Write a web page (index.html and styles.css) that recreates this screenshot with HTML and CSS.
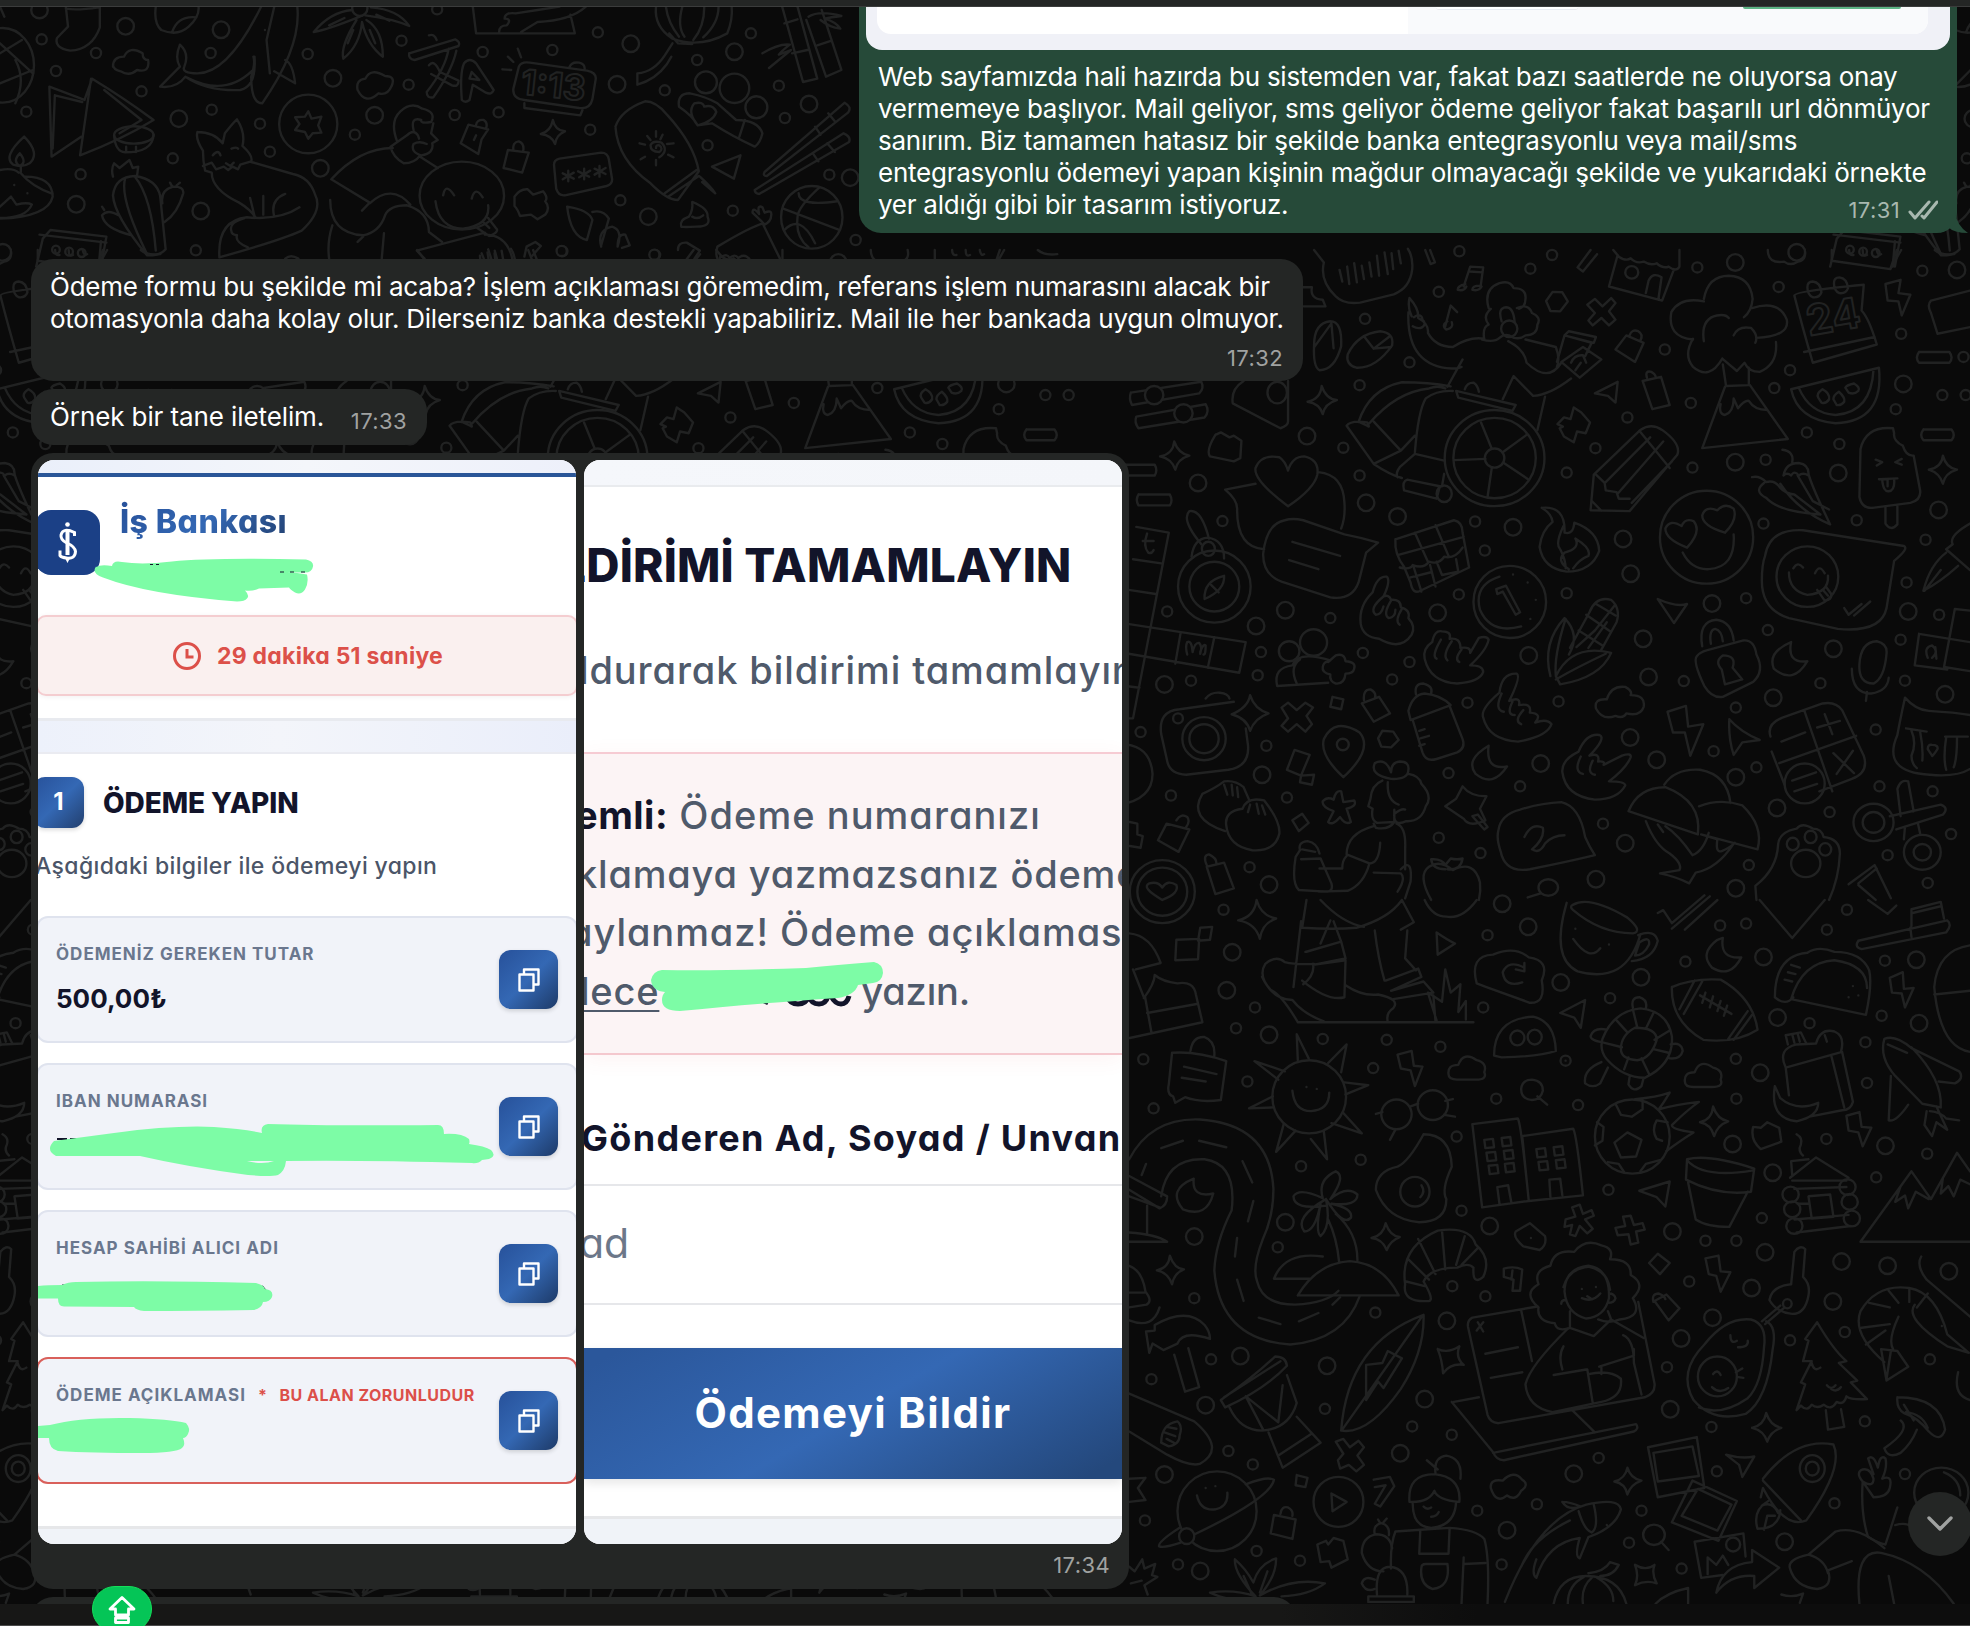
FILE: index.html
```html
<!DOCTYPE html>
<html lang="tr">
<head>
    <meta charset="UTF-8">
    <meta name="viewport" content="width=device-width, initial-scale=1.0">
    <title>Sohbet</title>
    <link rel="stylesheet" href="styles.css">
</head>
<body>
    <div class="chat">
        <!-- Duvar kağıdı -->
        <svg class="wallpaper" width="1970" height="1626" viewBox="0 0 1970 1626" aria-hidden="true">
            <defs>
                <path id="dots-a" d="M626 3h0M797 12h0M757 45h0M1065 42h0M588 101h0M452 166h0M534 271h0M442 326h0M1005 240h0M1215 89h0M1236 290h0M1441 202h0M1480 50h0M1207 333h0M1053 369h0M1431 384h0M1267 440h0M1327 468h0M1191 506h0M1056 525h0M936 404h0M877 478h0M824 537h0M412 477h0M442 544h0M189 654h0M655 655h0M673 725h0M625 831h0M824 828h0M388 888h0M87 872h0M260 970h0M448 972h0M534 994h0M254 1026h0M131 1039h0M502 1036h0M641 1092h0M809 1089h0M270 1196h0M38 1163h0M94 1316h0M308 1321h0M606 1262h0M738 1294h0M1187 660h0M1359 652h0M1486 699h0M1451 802h0M1155 840h0M1195 917h0M1440 940h0M1511 880h0M1448 1039h0M1292 1045h0M1040 1040h0M1136 1104h0M1095 1209h0M1174 1248h0M1394 1157h0M1401 1294h0M1499 1306h0M1309 1356h0M1533 1409h0M1416 1460h0M1160 1484h0M1490 1527h0M891 1384h0M665 1455h0M588 1418h0M239 1489h0M1556 258h0M1560 350h0M1517 350h0"/>
                <path id="rings-a" d="M1135 30h0M1544 48h0M1445 323h0M345 449h0M144 562h0M454 610h0M512 643h0M725 669h0M928 697h0M942 781h0M1135 512h0M1325 538h0M1510 627h0M1092 853h0M965 938h0M975 1030h0M754 978h0M586 875h0M305 869h0M251 907h0M82 1048h0M1205 1080h0M1316 962h0M1454 872h0M1522 1072h0M941 1176h0M990 1230h0M776 1239h0M262 1266h0M275 1531h0M932 1431h0M878 1518h0M1136 1272h0M1212 1346h0M1136 1540h0"/>
                <path id="dots-b" d="M191 21h0M678 76h0M249 232h0M214 277h0M374 300h0M492 302h0M591 317h0M43 344h0M467 363h0M235 392h0M62 450h0M670 232h0M822 347h0M845 443h0M694 429h0M621 511h0M444 561h0M334 575h0M630 671h0M901 626h0M291 750h0M613 834h0M674 856h0M471 891h0M137 860h0M168 992h0M58 1035h0M200 1190h0M245 1219h0M378 1099h0M539 1137h0M612 1155h0M252 1406h0M107 1435h0M332 1427h0M46 1340h0M659 1319h0M769 1305h0M704 1435h0M883 1205h0M1009 1009h0M1050 824h0M1137 736h0M1080 736h0M1184 687h0M1303 516h0M1395 599h0M1489 548h0M1136 343h0M1137 429h0M1272 266h0M1375 307h0M1378 395h0M1405 250h0M1411 131h0M1304 64h0M1341 21h0M1155 51h0M1107 55h0M1043 133h0M904 212h0M1236 951h0M1337 933h0M1494 992h0M1374 1126h0M1091 1138h0M1101 1234h0M1318 1303h0M962 1319h0M939 1388h0M1036 1444h0M1448 1240h0"/>
                <path id="rings-b" d="M705 8h0M753 58h0M207 113h0M197 195h0M275 291h0M813 178h0M961 167h0M1187 123h0M1469 129h0M1213 254h0M1474 266h0M1181 373h0M1130 527h0M1412 531h0M1204 589h0M1019 716h0M682 704h0M1190 761h0M1331 781h0M1416 790h0M1165 838h0M1315 867h0M1529 802h0M1093 902h0M1035 947h0M603 909h0M305 696h0M137 727h0M222 985h0M382 1006h0M158 1091h0M562 1078h0M517 1195h0M82 1241h0M148 1449h0M837 1239h0M714 1361h0M1226 1386h0M1015 1100h0"/>
                <path id="dots-c" d="M76 118h0M102 213h0M175 159h0M384 159h0M258 274h0M48 335h0M386 329h0M315 475h0M147 523h0M357 751h0M474 371h0M492 455h0M561 162h0M745 254h0M732 122h0M797 28h0M880 156h0M909 337h0M829 345h0M647 404h0M1007 150h0M1090 97h0M1076 389h0M1131 601h0M1024 753h0M1193 764h0M1212 271h0M1271 180h0M1290 436h0M1336 632h0M1369 100h0M1420 257h0M1431 354h0M1512 524h0M1560 720h0"/>
                <path id="rings-c" d="M72 30h0M229 79h0M403 89h0M607 235h0M326 356h0M584 505h0M683 346h0M139 613h0M366 633h0M1125 253h0M1150 131h0M1182 650h0M1339 155h0M1475 312h0M1550 533h0M5 757h0"/>

                <!-- Orta bölüm: tekerlekli sandalye, ağaç, emoji, kilit -->
                <g id="part-a" transform="translate(1120 250) scale(.5421 .4145)">
                    <use href="#dots-a" class="dot"/><use href="#dots-a" class="dot-hole"/>
                    <use href="#rings-a" class="ring"/><use href="#rings-a" class="ring-hole"/>
                    <!-- ses balonu, notalar -->
                    <path d="M358 0l18 30q-8 45 22 82 15 20 45 15l62-20q30-15 34-60 2-30-8-50M405 48l5 28M419 40l4 42M432 32l5 46M446 38l4 32M460 30l4 34M474 14l4 48M488 6l6 52M501 8l3 38M514 2l4 30"/>
                    <path d="M338 90h16q-4 28 20 30l5 16h-40M634 88l12-48 24 2-5 48M645 52l24 2M637 82q-14 4-14 14 12 4 16-8M664 86q-14 0-14 10 12 4 17-8M600 184l10-50 12 16M604 172q-12 10-2 20 14-4 10-18"/>
                    <path d="M563 0l10 34 8-4-9-30M868 0l-24 42 10 10 26-42"/>
                    <!-- dükkan -->
                    <path d="M918 12l-16 76 98 34 22-76M910 0l10 16q14 12 22 4 10 14 24 8 12 10 24 4 12 14 22 8 14 14 20 0V0M970 104l5-30q8-22 24-8l-6 54"/><ellipse cx="944" cy="54" rx="12" ry="15"/>
                    <path d="M1195 0q0 34 30 28 12 12 26 0 16-4 12-28M1313 0v26l108 20 12-46M1421 46l20-46M1345 0q0 14 8 12M1370 0q0 18 8 12M1396 0q2 16 8 10M1503 0q12 14 36 10"/>
                    <!-- terlikler -->
                    <path d="M358 230q0-54 30-58 22 0 20 60-12 58-40 58-12-8-10-60M358 235l32-58 4 60M420 252q18-50 60-56 26 4 22 34-30 56-66 54-20-8-16-32M450 208l18 30 28-28M468 238l32-4"/>
                    <!-- sandalyedeki kişi -->
                    <path d="M604 330l28-66M532 150q-4 130 80 136 12 0 18-4M534 116q18 26 16 48 20 14 18 36 14 34 46 34 30-26 58-20M534 116q-4 24 4 44M542 162q14-12 16 6 8 10 0 18-8 6-18-2M672 216q-4-30 8-36-12-20 4-38M680 140q-10-46 20-60 20-8 26 12 24 0 22 26 0 18-12 24M732 140q22-12 28 12 18 10 10 28 0 26-22 26-14 14-30 0-10-4-18 6-10 12-32 4M704 172q-8-32 8-34 14 0 16 36M748 216l56 18q8 28 2 48M716 220q30 20 34 52 40 50 64 0M832 310q-40 40-70 42l-36-48-20 56M784 354l-14 80"/>
                    <ellipse cx="718" cy="190" rx="15" ry="20"/>
                    <path d="M806 270l14-64 50 18-12 32M828 196l50 14-4 14-54-18zM814 270l40-36 34 30-40 44zM832 272q6-20 22-18l6 18M840 290l10-18"/>
                    <path d="M544 488q6-100 20-130 20-20 50-18M440 415q20-80 80-96 50 0 90 10M460 418q50-76 110-84 16-8 30 0M418 424q8-14 38-8 6 14 0 8l-16-10M418 424l50 92q30 26 52 34M468 414l50 70 26-36M468 516l50-32M544 492l-28 32q-8 14-4 24M544 492l54 16M598 540l-4 30M530 554l60 16-6 30-60-20q-4-22 6-26M620 340l110 34-6 14-100-32zM636 336q4-16 16-16 8 6 10 22"/>
                    <ellipse cx="691" cy="502" rx="92" ry="116"/><ellipse cx="691" cy="502" rx="76" ry="97"/><ellipse cx="691" cy="502" rx="18" ry="23"/><ellipse cx="598" cy="588" rx="14" ry="20"/>
                    <path d="M686 480l-20-64M706 488l44-42M708 514l46 40M686 524l-8 72M674 504l-58 3"/>
                    <!-- ağaç ve dağ -->
                    <path d="M1077 118q8-56 46-56 40 2 44 56-2 30-16 44M1077 124q-44-12-60 26-8 60 40 66M1166 140q50-20 64 28 6 40-56 44M1057 214q-18 40 0 68 30 34 54-20M1210 222q4 54-30 72-20 0-28-22l-14 20-27-30M1077 220q-6-54 24-62 16-4 22 6M1132 206q8-24 32-18 14 18 8 36M1112 276l6 52 42-2v-42"/>
                    <path d="M1116 330l-42 148 158-22-70-130M1108 372q-4 24 8 26 16-8 16-40l8 24q12-20 20-18 10 22 34 22"/>
                    <!-- altıgen, çarpı, etiketler, uçlar -->
                    <path d="M798 101l18 1 10 22-14 24-18-1-8-24zM862 132l14-14 14 18 16-20 8 12-12 20 12 20-12 14-14-18-16 18-8-12 12-18zM914 240l20-34 32 18-16 46zM940 206q4-16 16-10 10 8 4 22M964 316l34-10 16 68-32 10zM972 308q-4-18 8-14 8 6 8 12M876 346l42-28-4 50-14-16zM807 420l12-16 12 4 6-28 14 12 16 24-8 26-16-4-6 26-18-14-8-20 6-4z"/>
                    <path d="M1244 110q0-10 128-26l-4 62q14 20 28 82l-118 44q-20-90-34-162M1262 246l130-36M1268 90q0-14 10-14 14 2 16 26-4 14-16 12-10-6-10-24M1317 80q0-14 10-14 14 2 16 26-4 14-16 12-10-6-10-24M1412 82l28-10-4 32 22 4-16 50-6-34-20-2zM1568 98l-72 24q-8 10 0 30l12 50 60-16"/>
                    <!-- karpuz -->
                    <path d="M1238 336l162-52q10 130-80 134-70-8-82-82M1252 332q20 62 68 66 66-6 70-110M1288 356q-4-10 8-20 14 10 12 24-6 12-14 8zM1316 360q0-10 10-18 12 14 10 24-6 10-14 8zM1338 332q2-6 16-10 12 10 8 18-8 10-18 4z"/>
                    <path d="M1474 246h56q8 14 0 26h-56q-8-12 0-26M1482 433h52q8 14 0 26h-52q-8-12 0-26M0 518h64q6 14 0 26H0M34 590h58q6 14 0 26H34q-6-14 0-26"/>
                    <!-- kaydırıcılar, pizza -->
                    <path d="M20 344l130-26q6 16-4 28L22 374q-6-16-2-30M30 402l128-30q8 18-2 32L34 430q-8-14-4-28"/><ellipse class="solid" cx="63" cy="350" rx="17" ry="22"/><ellipse class="solid" cx="117" cy="394" rx="17" ry="22"/><ellipse cx="290" cy="344" rx="18" ry="26"/>
                    <path d="M228 316q-24 20-20 54l88 60q14-6 14-16V316"/>
                    <path d="M346 366q24-6 26-38 8 32 28 34-22 8-26 34-6-26-28-30M74 498q24-6 26-36 8 30 28 34-22 8-26 34-6-26-28-32M176 446l10-6 16 12 8-4 14 12-2 42-12 8-44-12q-8-14 10-52"/>
                    <!-- kalem -->
                    <path d="M868 628l6-86 86-108q20-18 40 0 36 34 28 60l-88 136zM878 542l16 20 2 18 20 4 4 16 20 0M896 560l82-108M918 588l84-126M944 610l74-100M958 436l56 90M870 605l18 24"/>
                    <!-- ısırılmış dondurma -->
                    <path d="M1426 430q-50-6-60 50l-2 116q4 28 24 26l70-12q20-6 18-30l-12-84q-14 2-20-24-18-12-16-30zM1412 620v40q10 20 22 2v-44M1394 506l12 6-10 8M1442 504l-12 8 12 6M1400 553l34-2M1406 554q2 30 12 28 12-2 10-30M1416 556v14"/>
                    <path d="M1492 530q24-6 26-34 6 30 26 34-22 8-26 34-6-26-26-34M1166 548q14-4 26 12 16-6 26 14 10 14 26 16l48 48M1188 562q-20 20 4 36 24 34 100 40M1222 482q22 4 18 30M1224 544q4-30 28-30 20 4 18 30-10-8-18 0-8-14-14 0-8-8-14 0M1270 540q6 30 40 122-60-34-92-98M1250 544l28 62 30 20"/>
                    <!-- sohbet ve kalp -->
                    <path d="M310 618q-64-62-60-92 10-34 44-26 10 8 16 32 8-34 30-34 28 8 24 44-6 34-54 76M250 564l-56 14q24 26 22 50 0 90 50 94M366 536q46 6 48 74 2 34-6 62M304 652q-34 8-40 82 0 50 34 66l90 38q40 8 52-36l14-72 22-24q-30-12-62-20l-76-34q-20-6-34 0M318 704l88 34M312 748l54 22"/>
                    <!-- hediye, ateş, saat -->
                    <path d="M508 698l108-46q16 4 16 30l12 84-90 56q-14 10-18-20l-12-38q-18-30-16-66M512 736l122-44M544 682l24 70M582 664l24 74M516 766q20 6 24-6 20 10 30-8 18 8 28-12 20 6 34-22M542 766l14 58M572 760l10 52M536 790l36-12M584 752l10 32 30-8-4-30"/>
                    <path d="M778 622q44-6 42 60 16 6 18-24 44 20 46 68-14 50-60 50-44-8-50-60 4-40 24-60-2-20-20-34M818 666q-16 44-6 56 10 24 10 46M828 770q-24-20-8-40 30-10 20-34 30 24 24 42-16 8-28 30"/>
                    <ellipse cx="719" cy="849" rx="67" ry="87"/><path d="M700 788q-48 20-36 80 20 60 76 40M694 818l18-8 26 64-8 6-24-56-10 6zM725 783h0M752 802h0M767 844h0M757 890h0"/>
                    <!-- gülen yüz -->
                    <ellipse cx="1082" cy="693" rx="86" ry="112"/><path d="M1046 718q-40-20-40-46 8-24 30-6 6-20 22-12 16 24-12 64M1116 682q-42-16-42-42 6-24 28-12 14-20 30-4 8 26-16 58M1038 730q16 42 48 40 50-4 46-84"/>
                    <path d="M1190 738q8-66 70-62l186 38q10 6-18 36l-14 114q-10 60-90 50l-90-26q-50-20-50-90 0-40 6-60"/><ellipse cx="1268" cy="788" rx="57" ry="73"/><path d="M1234 778q0 44 34 54 40-4 38-46M1242 768q8-18 18-2M1282 780q8-24 18 0M1286 820l14 26q14-2 12-16l-10-18M1298 822l8 12M1336 864l8 16 24-26M1354 882l30-34"/>
                    <path d="M1568 660q-40 30-32 50l-12 12 44 50M1524 730q-30 30-42 92 30-20 64-60M1484 822l30-50"/>
                    <!-- pusula -->
                    <path d="M150 710q-38-60-22-80 22-6 36 66"/><ellipse cx="163" cy="721" rx="12" ry="17"/><path d="M132 740q4-44 30-46 30 6 30 50"/><ellipse cx="174" cy="812" rx="67" ry="87"/><ellipse cx="174" cy="812" rx="46" ry="60"/><path d="M156 842q-2-44 36-56 2 34-36 56M168 808l14 18"/>
                    <!-- kelime kareleri -->
                    <path d="M30 668l60 14-66 448h-24M24 746l52 10M16 820l50 10M14 902l218 44-12 74L16 974M112 922l-10 76M174 934l-12 74M0 1050l36 6M124 976q-4-20 0-30 8-6 10 24M134 970q4-24 12-22 6 8 2 26M148 970q6-22 10-16 0 24-4 22M50 684q-8 30 2 46 6 4 10-6M42 702h20"/>
                    <!-- eller -->
                    <path d="M444 902q-4-44 22-76 8-40 26-38 8 10-6 48 10-6 14 8 18-2 18 18 18 6 14 26 14 20 6 40-20 40-60 10-30-4-34-36M486 836q-28 30-14 44 10 0 14-20M500 846q-16 34-4 42 12-2 12-20M520 866q-14 30-4 38"/>
                    <path d="M562 986q-4-24 14-40 4-30 18-26 18 0 14 18 20-4 20 22 20-4 18 12l16-36q14-6 18 4-4 26-34 62 24 0 24 16-6 24-48 28-50-4-60-60M592 940q-18 40-8 46M612 944q-18 34-8 46M630 964q-14 24-4 30"/>
                    <path d="M670 1128q-6-20 30-60 4-48 32-46 8 8-14 66 22-12 18 10 24-6 20 18 24 2 10 24 22-10 30 4-8 30-62 42-54-4-64-58M704 1070q-14 40 4 44M724 1090q-12 32 4 32M744 1110q-18 26-4 34"/>
                    <path d="M816 1260q-2-30 30-50 14-44 38-40 14 6-18 50 20-8 16 14 14-2 10 8l34-22q18-8 16 4-8 26-40 58 30 0 30 10-14 34-56 34-54-8-60-66M850 1222q-14 36 4 42M872 1232q-12 30 4 34"/>
                    <!-- mısır -->
                    <path d="M794 1028q-16-80 26-140 30 40 8 88M822 890q-22 90-18 138M804 1028q30-80 102-56-20 60-94 76zM830 960l36-86q12-40 40-30 18 20 10 54l-28 66M804 1036q40-30 92-62M876 852l38 30M860 880l44 40M846 918l44 36M912 858l-36 60-34 40M898 898l-34 62"/>
                    <path d="M992 842q34 20 54 12l-24 46zM322 1206l28 12-16 50-26-14zM334 1268l24-2-4 24-22-6zM392 1078l20 6-4 24-20-6zM446 1094l32-16 20 40-30 20zM450 1086q-2-26 12-26 12 8 8 22M484 1160l20 2 10 20-14 18-18-2-6-20z"/>
                    <!-- kişiler -->
                    <ellipse cx="357" cy="947" rx="25" ry="32"/><ellipse cx="312" cy="968" rx="19" ry="24"/><path d="M388 990q-60-24-70 12-36 6-28 50l94-8M326 1046q-14-40 6-58M384 994l14-16q16-6 18 14 20 2 16 18-2 12-16 12-2 26-18 24-12-6-10-22-16-4-14-18 2-14 10-12"/>
                    <!-- fotoğraf makinesi -->
                    <path d="M210 1090l-100 18q-40 4-34 60l12 70q6 26 34 28l78-12q40-8 36-60l-4-40M158 1082q10-16 26-14 16 2 18 14M206 1120q30-16 34-46 8 34 34 44-26 12-34 42-6-30-34-40"/><ellipse cx="155" cy="1179" rx="40" ry="52"/><ellipse cx="155" cy="1179" rx="27" ry="35"/><ellipse cx="107" cy="1130" rx="9" ry="12"/>
                    <path d="M298 1104l12-12 16 18 16-18 14 12-12 20 10 20-12 18-16-18-16 18-12-14 12-18zM412 1272q-44-54-36-92 20-54 66-16 26 40-30 108"/><ellipse cx="411" cy="1193" rx="11" ry="14"/>
                    <path d="M532 1112q8-40 30-42 30 4 48 28l-74 36zM546 1072q-4-26 14-26 18 6 14 24M540 1134l18 78q6 24 26 16l38-16q16-10 10-32l-24-80M552 1160l10-4M554 1178l16-6M552 1196l10-4"/>
                    <path d="M680 1196q-44 34-24 68 32 34 58-18-40 10-34-50M1238 946q-44 24-32 64 36 40 62-18-38 6-30-46M878 1106q-4-24 20-22 8-34 34-30 14 10 10 20 28 0 24 28-6 24-32 16-6 14-20 6-24 12-36-18"/>
                    <!-- asma kilit -->
                    <path d="M1074 956q-8-60 26-64 28 4 32 50M1090 950q-4-34 8-36 12 4 14 30M1082 966l68-24q20-2 24 34 16 40-6 66l-56 36q-20 4-34-26-22-60-14-72 6-10 18-14M1110 1012q-14-20 2-34 26 0 18 30l18 28-32 12z"/>
                    <path d="M1364 1000q2-54 32-56 20 6 18 30-4 60-24 72-28 0-26-46M1350 1010q0 60 36 60 30-6 32-38M1376 1088l2-22M1010 1114l34-14 4 50 28-6-24 76-10-56h-22zM1124 1132q20 30 56 50l-32 6-16 30q-10-40-8-86"/>
                    <!-- hesap makinesi -->
                    <path d="M1200 1174q-8-30 22-46l74-34q24-6 36 16l40 110q10 40-22 56l-60 30M1226 1290l-24-80M1262 1110l52 196M1216 1238l142-66M1220 1186l44-22M1286 1152l42-16M1300 1120l14 48M1316 1214l38 48M1352 1208l-30 56"/><ellipse cx="1263" cy="1287" rx="37" ry="48"/><path d="M1240 1280l44-20M1244 1306l42-18"/>
                    <path d="M1448 1080q20 30 44 32 50 4 76 10M1448 1080q-10 60-14 90-30 90 60 96 50 6 74-14M1450 1154l38 8M1522 1174h42M1460 1160q10 30 0 60 0 20 10 30M1476 1162q6 40 4 70M1524 1176q-6 50 0 78M1544 1178q0 50-6 70M1490 1204q0-12 8-10 12 0 10 10-10 20-10 16z"/>
                    <path d="M1568 870l-28-4-20 140 48 10M1474 926l94 20M1474 926l-8 76 60 10M1490 984q-8-26 8-30 14 14 0 30M1504 958l2 28"/>
                    <!-- mantılar -->
                    <path d="M194 1402q-70-30-42-90 24-14 40-30 20-4 36 14l10 30M192 1290l6 24M206 1290l2 26M216 1296l2 24"/><path d="M196 1388q-4-34 30-40 8-30 40-20 30 50 28 80-8 44-50 40-44-10-48-60M240 1338l-4 18M252 1336l4 24M262 1340l6 22"/>
                    <path d="M374 1330q8-12 20-4 4-24 14-20l4 26 20-4q6 14-14 20l8 32q-10 8-20-12-14 22-22 12l10-26q-22-10-20-24M318 1376l18-16 12 22-18 20zM86 1384l42 14-20 54-38-28zM104 1376q8-18 20-8 6 10-2 24M18 1380l14 4v26l10 4-4 28-20-4"/>
                    <!-- yürüyen kadın -->
                    <path d="M500 1276q-40-10-30-38 20-14 30 22 0-24 16-26 18 0 16 20 0 24-32 22M484 1280q-20 10-22 44l-4 18 8 6q-4 26 8 34l32-2M494 1284q-2 44 20 54M532 1264q20 4 24 24 22 30 8 54-8 38-36 36-24 14-22-18 14-14 20-10M506 1350v30q-10 20-34 14l-4-10M480 1430q-2 50-20 50l-42-22q0-50 50-68M510 1384q18 8 16 60v50M460 1480q-10 50-40 66l-54 2M468 1502l50 2q10 12-6 44M418 1462q-8 10-8 30h-42M334 1470l36-2 20 60q4 20-10 20l-50-4q-14-16-6-80l8-16q-4-20 14-22 18 4 22 30M336 1446l24 6M518 1494q22-30 18 30l-10 40"/>
                    <path d="M600 1342l20-18 12-30q14 24 44 24l-12 30 10 28q-30 18-40-4zM650 1366l10-4 18 30-6 6z"/>
                    <path d="M698 1400q4-38 40-50 40-16 76-18 34 10 44 84 8 24 18 44-50 16-120 34-46 10-54-44-8-30-4-50M746 1416q14-36 34-22 4 26-20 52 14 12 24-14 14-20 36-20"/>
                    <path d="M574 1568q-26-60-4-80 20-18 44 8 40-26 50 30 2 20-2 42M600 1494q-24 0-26-24 20-2 26 14l10-16q12 4 22 0-4 30-28 26"/>
                    <!-- mantarlar -->
                    <path d="M1066 1410q8-80-60-114-50 0-68 58zM1004 1290q20-40 66-36 50 12 56 80M1068 1342q40-20 80-2 40 50 28 106l-104-36M970 1378q18 60 44 78 24 24 18 40l-36 8q30 8 54 24l12-26q40-10 70-70M992 1386l10 18M1006 1390q24 20 50 70 20-10 30-54M1072 1410l30 12q-4 34 8 28 16-8 24-20"/>
                    <!-- pati, makas -->
                    <path d="M1174 1568l-2-34q40-40 42-100 2-30 34-38 10-16 30 0 16 0 20 20 30 4 30 40-2 60-20 112"/><ellipse cx="1265" cy="1480" rx="27" ry="33"/><ellipse cx="1241" cy="1433" rx="11" ry="15"/><ellipse cx="1274" cy="1416" rx="11" ry="15"/><ellipse cx="1301" cy="1446" rx="11" ry="15"/>
                    <ellipse cx="1390" cy="1381" rx="37" ry="45"/><ellipse cx="1390" cy="1381" rx="20" ry="25"/><ellipse cx="1480" cy="1453" rx="34" ry="42"/><ellipse cx="1480" cy="1453" rx="16" ry="20"/><path d="M1420 1366l94-28q16 8 4 24l-86 36M1440 1366l-6-66q6-24 20-18l10 72M1448 1392l-2 30M1472 1384l4 24M1344 1530l48-46 30 80M1362 1532l32 36M1396 1492l-34 36"/>
                    <ellipse cx="78" cy="1548" rx="60" ry="76"/><ellipse cx="78" cy="1548" rx="46" ry="58"/><path d="M78 1568q-40-30-24-40 16-6 24 10 10-20 26-6 6 20-26 36M160 1488l32-10 18 62-34 14zM160 1484q-8-24 4-26 14 8 14 22"/>
                    <ellipse cx="790" cy="1538" rx="18" ry="20"/><path d="M776 1552l-24 10M0 1192q56 0 60 72 0 60-60 74"/>
                </g>

                <!-- Alt bölüm -->
                <g id="part-b" transform="translate(1120 900) scale(.5421 .463)">
                    <use href="#dots-b" class="dot"/><use href="#dots-b" class="dot-hole"/>
                    <use href="#rings-b" class="ring"/><use href="#rings-b" class="ring-hole"/>
                    <path d="M218 44q30-8 34-44 8 34 36 40-26 10-30 44-8-34-40-40M104 86l42-2-2 44-42 2zM148 60l22-2-4 28-22 2zM17 72q40 4 58 64l-46 14M24 150l20 60M44 212q20-32 20-50 14 14 42 18 30-6 34 24l12 60-134 34M50 244l94-20M46 208l12 78"/>
                    <!-- yürüyüş -->
                    <path d="M334 46l-14 142M344 0l-8 60q60 4 100 0 60-20 84-60M370 0q40 50 80 58M520 0l22 48-24 16M394 46l14 44-64 22M388 44l-18 50M342 112l66-22 8 36-60 14M356 140l60-10-2 80q-30 10-78-36M356 138q4 24-18 44M470 66q6 60 18 108M530 66l-4 60 20 26M490 174l60-26 6 18-56 30M500 196l60-20 18 24-74 14M328 264q-30-60-50-70-24-30-10-56 20-20 36-4 20 6 54 4M328 264h324M416 184q30 24 60 20 42 10 28 30-14 10-10 30M578 206l4 56M584 260l-16-60 26 20 6-70 10 50 18-18-4 60 14-24v40M262 166q20 50 56 50 20 30 58 46"/>
                    <path d="M584 70q20 16 34 24l-32 24zM562 0q14 36 40 36 30 6 56-36M658 180q-14-60 30-62 40-20 66 6 40 6 24 50 8 50-22 48l-80-34zM746 146q-30-18-40 10 4 34 36 22M746 136v18l-16-4"/>
                    <!-- kupa -->
                    <path d="M824 6q-30 120 20 148 90 30 116-80M836 10q30-20 100 28 30 30 10 34-60 0-110-50-8-8 0-12M956 76q30-14 36 12-8 40-48 44M958 92q20-16 18 4-10 24-26 24zM836 84q30 50 50 20M840 62h0M902 96h0"/>
                    <path d="M992 28l10-6 16 28 60-60M1018 62l70-70M1042 64l60-64M1180 0l60 82 60-82M1102 86q-34 30-10 60 34 24 54-22-40 4-34-42zM1362 88l164-44q10 10-2 26l-156 36q-14-4-6-18M1458 60l2 20M1460 56v-36l54-16 6 36M1462 28l50-14M1380 0l36 30 16-18"/>
                    <!-- taco, futbol topu -->
                    <path d="M1208 210q0-90 60-96 20-16 50-2 50 0 64 40 6 30-6 96l-138-34q20-80 80-84 60 10 60 60M1208 210q20 20 34 0M1238 140l16 6M1232 156l14 4M1226 172l14 4M1352 186h0M1362 206h0M1344 210h0M1018 188q40-20 90-16 60 40 68 108-40 30-100 22-60-40-58-114M1060 174l-28 62M1074 176l-34 70M1158 240l-36 60M1166 248l-34 54M1070 206l58 40M1080 200l-6 22M1094 208l-6 24M1108 218l-6 22M1120 228l-6 22"/>
                    <path d="M1420 168l24-12 2 36 18-2-16 42-6-30-18-2zM1568 98q-60 10-66 90 10 130 66 140M1502 204l66-8M812 244l46-28-8 60-12-22zM690 336q0-80 72-84 40 10 42 74-30 12-100 14zM822 347h0"/><ellipse cx="733" cy="298" rx="13" ry="16"/><ellipse cx="765" cy="296" rx="13" ry="16"/>
                    <!-- kaplumbağa -->
                    <path d="M890 300q20-60 70-66 50 6 58 60 4 60-50 90-40 0-70-40-14-20-8-44M924 322q0-30 26-46 40 0 40 26-10 40-36 44-30-2-30-24M946 236l8 38M984 244l-14 34M1014 282l-28 20M1012 330l-28-8M976 376l-14-34M930 366l8-26M892 308l34 10M916 260l20 26M946 232q-4-22 12-22 16 6 12 24M1016 312q20-6 22 14-4 18-24 16M966 384l-4 18q-14 16-24-4l2-16M900 362l-14 34q-14 12-28 0-4-30 30-46M892 308q-24-4-24-14 6-20 30-14"/>
                    <!-- kese, muz -->
                    <path d="M1228 362l104-34 20 108q-4 18-20 18l-60 14M1228 362q-16-40 20-50l36-2q8-34 34-26 20 10 12 44M1232 312l-4-20 28-6 10 24M1240 290l4 18M1250 288l4 18M1228 362l6 60M1208 402q-10 70 40 76 40-10 40-40-40 20-70-10zM1312 336l24 112M1300 292l4 14"/>
                    <path d="M1410 300q20-10 50 20l88 50q10 16-8 26l-30-4M1410 300q-10 40 20 80l50 60 34 8q4-60-54-130M1416 312l36 18M1422 380l-4 96q14 4 36-34M1488 456l-4 30 14 24 8-30 20 16-20-50M1494 456q20 2 30 16l24 4"/>
                    <!-- güneş -->
                    <ellipse cx="349" cy="425" rx="68" ry="79"/><path d="M318 412q4 44 34 44 34-2 34-40M344 404h0M363 408h0M328 346l-2-56 22 52M384 352l34-40-10 60M414 394l44 6-42 20M412 460l34 44-56-22M376 500l6 60-30-44M302 484l-14 60 36-46M284 448l-46 2 44-26M292 388l-44-40 56 22"/>
                    <path d="M512 334l26-8 4 32 16 2-14 42-8-34-18-4zM96 330q46-4 100 18l-10 84q-40 6-66-6l-18 12-4-14q-12-4-8-26zM130 326q4-32 26-30 20 8 18 40M118 360l60 16M114 384l44 8M606 376q-2-20 18-20 10-30 34-10 20 6 14 26 6 16-16 16h-34q-16 0-16-12M1042 392q-2-20 18-20 10-30 34-10 20 6 14 26 6 16-16 16h-34q-16 0-16-12M740 408q2-20 20-20 20 2 20 24-4 20-20 20-20-2-20-24M770 424l18 18"/>
                    <ellipse cx="510" cy="463" rx="28" ry="32"/><ellipse cx="577" cy="443" rx="28" ry="32"/><path d="M536 446l14-6M484 458l-12 4M508 496l-10 22M598 464l20 4M600 434l14-4"/>
                    <!-- yol ve ada -->
                    <path d="M17 560q40-90 130-86 130 10 136 150 0 60-20 110-20 60-10 90 10 50 70 50 60-4 80-30M76 640q10-84 80-80 60 10 50 110-30 70-32 130 10 150 140 160 100-10 128-104M76 536l40-16M146 520l50 14M226 564l18 46M246 650l-10 44M216 730l-4 40M216 820l12 46M256 902l40 14M330 910l36-18M392 874l14-16M48 570l-8 24"/>
                    <path d="M328 854h186q-30-70-90-74-60 4-96 74M284 818h66M284 818q20-60 90-48M404 780q-4-50-20-90M438 778q0-60-40-100M380 660q-60 10-60-20 10-20 54 4-10-40 24-58 20 10-10 60 30-30 50-10 0 26-48 20 40 10 36 30-14 20-46-40 10 60-10 80-10-10 0-70-10 60-30 60-20-30 40-70"/>
                    <path d="M136 602q-50 24-20 66 44 20 56-34-40 10-36-32M17 596l70 44q0 20-14 26l-56-40M17 640l56 24M50 660v60M17 738h70q-20-16-70-20M68 800q22-6 24-32 8 28 26 30-18 8-22 32-8-26-28-30M17 790q24 10 30 56 14 20 2 28l-32 6M17 848h28M17 908q44 20 56-28"/>
                    <!-- yumurta, bina -->
                    <path d="M560 506q50 0 52 70-20 50-10 70 0 50-50 50-60-6-80-70 0-40 40-50 20-10 48-70"/><ellipse cx="544" cy="630" rx="27" ry="32"/><path d="M556 616q8 14-2 26"/>
                    <path d="M668 664l-18-180 84-12q6 12 20 178zM754 650l-12-140 94-16q6 10 18 144l-100 12M700 656l-4-36 20-4 6 38M794 642l-2-38 20-2 4 36M672 518l16-2 2 18-16 2zM704 514l16-2 2 18-16 2zM676 546l16-2 2 18-16 2zM708 542l16-2 2 18-16 2zM680 574l16-2 2 18-16 2zM710 570l16-2 2 18-16 2zM768 538l16-2 2 18-16 2zM800 534l16-2 2 18-16 2zM772 566l16-2 2 18-16 2zM804 562l16-2 2 18-16 2z"/>
                    <!-- futbol topu -->
                    <ellipse cx="945" cy="511" rx="69" ry="80"/><path d="M912 524l24-22 26 16-10 36-28 2zM914 440l10 24 20 4 20-16v-20M1010 480l-20-4q-10 20 0 40l10 4M880 480l12 10-2 30-14 10M900 566l20 4 10 18M960 586l10-16 26-8M950 430q40-4 64-14-10 20-20 36 30-10 74-16-20 16-50 50 0 10 40 16-20 14-50 40"/>
                    <path d="M958 628l56-20-8 54-16-20zM730 716l26-18 28 28q4 20-10 30l-30-8q-20-20-14-32M758 730h0M822 690l18-6-6-20 14-6 6 20 16-8 4 12-16 8 14 20-10 10-14-16-8 22-10-4 4-20-14 4zM914 708l18-4-4-20 14-2 6 20 16-4 4 14-16 4 4 24-14 4-4-22-20 2zM1070 480q22-6 24-34 8 28 28 32-20 8-26 32-6-26-26-30M1168 490l14 2 12-12 22 12 4 30-38 16q-20-20-14-48M1340 466l24-8 4 32 18 2-16 40-8-30-18-4z"/>
                    <!-- saksı, kulübe -->
                    <path d="M1046 560q40-12 124 20l-6 50q-60 10-120-26zM1046 562q30 40 122 22M1048 610l14 80q20 16 62 16l34-76"/>
                    <path d="M1236 600l48-44 60 44M1240 594l-2-30 32-4M1240 606h100M1244 624l96-4M1250 656h20M1244 690l100-10M1248 718l100-14M1270 640l40-4 6 48-40 4zM1260 552q-10-10-4-24 4-14-8-22"/><ellipse cx="1237" cy="636" rx="15" ry="17"/><ellipse cx="1240" cy="668" rx="15" ry="17"/><ellipse cx="1244" cy="704" rx="15" ry="17"/><ellipse cx="1342" cy="620" rx="15" ry="17"/><ellipse cx="1346" cy="652" rx="15" ry="17"/><ellipse cx="1350" cy="688" rx="15" ry="17"/>
                    <path d="M1568 738h-202l94-152 36 60 48-100 24 40M1440 618l-10 34 18-14 6 28 14-36 24 16M1518 600l-4 34 14-16 10 22 12-36 18 10"/>
                    <!-- kruvasan, anahtar -->
                    <path d="M526 830q-10-80 60-116 60-10 70 30 30 30 14 70-20 20-18-20-10-12-30 0-50 0-62 30 20 40 10 42-50 4-44-36M594 714l6 84M636 726l-16 62M660 752l-30 36M550 732l32 76M532 776l38 44M528 824l34 10M708 796q20-6 34 2l-4 46h-14l2-24-18-6zM724 800l-2 20M464 730q22-6 26-32 8 28 26 30-18 8-24 28-8-24-28-26M976 784l16-20 22 20-18 24zM1080 774l24-6 4 34 18 2-18 42-8-34-14-4zM986 866l22-14 24 30-20 26zM984 868q-4-18 10-18 10 4 12 12"/>
                    <path d="M1238 830l6-70q10-16 20-6l-4 60q14 16 10 40-6 40-30 40-30-4-42-30 4-30 40-34"/><ellipse cx="1231" cy="872" rx="8" ry="10"/><path d="M1226 880l-36 36M1218 876l-34 34"/>
                    <!-- dizüstü bilgisayardaki kadın -->
                    <path d="M772 880q-30-30 0-50-10-30 22-40 6-36 44-30 20-30 50-14 24 6 16 30 40 0 38 34 30 20 4 50 20 40-24 46-20 10-40 0M772 880q-4 30 30 34 4 20 28 10M820 846q0-50 44-56 40 6 38 70-8 40-42 44-36-10-40-58M818 836q10-40 46-44 36 8 40 50M814 872q0-8 8-8M902 850q10 0 12 10-2 10-14 10M830 888v36l44 18 32-36-6-18M852 840h0M878 836h0M862 856l6 4M852 860q20 10 34-10"/>
                    <path d="M770 878l-120 24q-10 6-8 20l36 190q4 16 20 18l270-56q20-8 18-30l-30-176M740 886l20 110M616 1084l46-10M612 1084l76 108q6 18 20 18l240-62q10-6 4-16l-264 62M836 1104l40 46M660 912l10 20M670 912l-12 18M674 980l60-14M684 1032l58-12M826 926q-70 80-78 120 4 50 50 60l90-22q40-10 36-50-20-20-60-10M818 964q-10 20-2 50M862 1014l10 72M800 1026l60-12M884 1008l64-24v-14M888 1010v14M906 906l60 40M928 940q20 10 20 60l14 68"/>
                    <!-- avokado, ağaç -->
                    <path d="M1192 910q20 10 12 60-10 110-50 140-60 20-96-30-30-60 20-120 40-60 86-54 30 10 24 60-4 80-30 110-50 40-90 20"/><ellipse cx="1102" cy="1029" rx="36" ry="43"/><path d="M1092 1052q14 16 30 2M1094 1024q8-12 14 2M1126 940q0 20 12 12M1140 966q20 0 18-14M1136 1020l12-8M1138 1030l12 2"/>
                    <path d="M1286 912q30 60 54 84l-14 4 34 38-12 4 30 36q-30 2-38-6-4 20-18 12-10 20-24 6-12 10-22 0-8 16-20 2l-8 10 16-56-8-4 20-46h-16l10-44-6-4zM1302 1102l4 42 30-6-6-38M1276 1000q4 20 16 10M1304 1048q8 12 16 0M1312 1056q10 8 18-4"/>
                    <!-- karides, mantar -->
                    <path d="M1410 998q-60-60-44-110 30-60 90-50 50 10 70 100l40 40-40-14q-80-60-60-90M1436 900q-20 50-10 70M1420 916l-52 8M1412 930l-36 30M1420 880l-38-10M1436 870l-18-26M1456 868v-30M1470 880l20-30M1404 970l30 4 20 34-40 30zM1422 974l-8 60M1478 770q-10 20 10 50l80 80M1516 920h0M1546 1020q-10 50 22 60M1434 1074q80 0 88 70-8 30-30 4-20-30-46-40-14-10-12-34M1446 1090l18 34M1450 1106q30 4 40 34M1440 1124q20 20-30 60 6 24 30 10 20-20 30-50"/>
                    <!-- çekiç, davul, yaprak -->
                    <path d="M48 932l16-2v-12q60-40 92 0 10 14 10 30-50-20-60 10l-26 14-20-14-6 20zM100 982l20 80 26-10-20-84M186 1080q60-50 100-94 20 0 22 20-40 50-114 90zM192 1074l104-78M202 1096q20 50 60 50 50-4 64-60l-18-60M232 1072l32 72M232 1072l60 56 8-80M274 1150l26 76 70-54-44-56M292 1200l62-48M560 896q-140 60-152 250 50 10 110-90 44-80 42-160M558 898l-148 246M454 1004v76l22-40 10 14 34-64-26-16-10 26z"/>
                    <path d="M17 1066l120 60q60 60 10 92-20 6-60-20l-70-50M76 1172q0-40 30-46 10 10 4 30 0 20-20 24zM82 1150l20 8M86 1138l18 4M86 1164l16 10M398 1170l14-6 12 18 16-14 10 14-12 18 12 20-14 14-14-14-16 8-4-18 10-14zM586 970q20 10 40-6-8 24 8 40-24-4-38 18-2-30-10-52"/>
                    <!-- gezegen -->
                    <ellipse cx="179" cy="1320" rx="73" ry="86"/><path d="M142 1286q6 34 34 30 24-6 22-36M158 1270h0M176 1266h0M232 1262q40-18 52-10-6 40-150 120M110 1356q-40 30-38 40 10 4 40-8"/><ellipse class="solid" cx="123" cy="1374" rx="14" ry="17"/>
                    <ellipse cx="403" cy="1300" rx="46" ry="54"/><path d="M390 1282l28 18-26 20zM326 1242l20 6-4 20-18-4zM284 1328l40 10-6 42-40-12zM296 1326q2-18 14-14 10 6 8 18M468 1252l30-6 8 20-26 44-10-6 20-40-20 4M364 1392l16-8 4 8 10-14 18 6 8 40-30 18-4-14-16 2zM17 1250l30-2-14 22 14 26-30 4M684 1270q-2-20 22-16 20-24 36-2 14 10-2 24-10 24-26 10-20 20-30-16M912 1256q20-6 24-30 6 24 26 28-20 8-26 30-4-24-24-28M1166 1140q22-6 26-32 8 28 28 32-20 8-26 30-6-24-28-30"/>
                    <!-- bahçıvan -->
                    <path d="M534 1300q-4-60 46-60 50 6 46 60-40-4-46-24-10 26-46 24M540 1304q0 50 34 52 44-4 46-56M582 1238q-4-34 20-38 30 6 26 50M566 1210l20 20M560 1310q6 8 14 2M574 1332q10 0 14-10M554 1360l54-4-2 56h-54zM556 1442q0-8 8-8h40q6 50-28 54-24-10-20-46M608 1356q50 4 64 24 10 40 6 140M630 1520l4-100M554 1360l-46 4q-10 30-8 80M634 1434l40-2M474 1500q-4-60 24-60 34 4 32 60M458 1504h84v12h-84z"/>
                    <path d="M502 1400q-4-30-30-30-26 6-26 40 10 40 40 40M470 1370q-4-20 12-24 16 4 14 26M480 1346l-4-8M486 1344l6-8M470 1468q-20-10-24 8 8 20 24 12"/>
                    <!-- yaprak, yunus, balkabağı -->
                    <path d="M250 1504q-40-50-38-80 20 20 34 50 10-40 42-52 0 40-30 80 60-40 120-26-30 26-80 28M250 1504q-40-16-84-8 20 10 30 12M228 1460l14 36M272 1450l-14 46M17 1440l10 10 14-26 4 20 20-10-6 24 10 4-24 18 6 20M20 1476l20-6"/>
                    <path d="M710 1516q60-180 150-210 60-16 64 10-10 40-60 60l-16 46q-10-4 0-44-60 10-80 86-10-8 0-40M816 1300q10 20 34 10-20-10-34-10M846 1320q10 40 24 46 14-10 4-60M898 1350h0M740 1440q20-60 90-100M800 1520q10-60 60-60 60 0 74 60M826 1520q0-40 30-58M870 1464q-20 20-16 56M880 1464q30 20 30 50M864 1454q30-4 40-24l16 6q-10 24-34 24M950 1436q20 14 36 0-6 20 4 40-20-8-40 4 8-20 0-44M988 1520q20-24 60-34v34"/>
                    <path d="M974 1182l90-22 14 110-86 20zM984 1194l72-14 12 64-76 12zM1056 1254l82 44-34 86-86-40zM1066 1272l62 34-26 56-66-32zM1060 1386l90-18 4 50M1060 1386l12 78 40-6M1084 1456v-36l16 16 12-20 10 20"/><ellipse cx="1131" cy="1392" rx="13" ry="15"/><ellipse cx="985" cy="1371" rx="20" ry="22"/>
                    <path d="M1100 1496q10-60 66-66v-26l50 38-46 44v-26q-44-4-70 36M998 1386l14 18M1118 1198q30 10 52 4l-22 44-6-26z"/>
                    <!-- roket -->
                    <path d="M1186 1250q60-90 130-74 20 50-50 164-40 20-80-70l-4 20M1186 1254l70 86"/><ellipse cx="1277" cy="1228" rx="23" ry="29"/><ellipse cx="1277" cy="1228" rx="12" ry="15"/><path d="M1196 1298q-30 20-20 60 40 0 42-40M1188 1360l6-30 14 0M1184 1308q20-10 30 16"/>
                    <path d="M1370 1256q-14-20 0-26 14-4 20 20 0 20-20 6M1390 1240l-10-34q10-10 18 20 4-30 14-20 4 20-6 44 20-10 14 20-4 20-30 20l-20-34q-4 70 10 120 20 14 32 16l22-80"/><ellipse cx="1515" cy="1280" rx="50" ry="54"/><path d="M1520 1236q30 14 30 50M1410 1400q-50-50-90-36l-50 50q-40 10-34 30 10 40 50 44 30-4 20-40l44-20M1364 1520q-10-120 40-110 80 20 134 110M1418 1460l10 60M1270 1414q30 10 36 40M1430 1350q30-10 40 20l20 10M1220 1500q20 8 40-2l-6 20"/>
                </g>

                <!-- Üst bölüm -->
                <g id="part-c" transform="scale(.5485 .3333)">
                    <use href="#dots-c" class="dot"/><use href="#dots-c" class="dot-hole"/>
                    <use href="#rings-c" class="ring"/><use href="#rings-c" class="ring-hole"/>
                    <ellipse cx="5" cy="196" rx="57" ry="112"/><path d="M0 130l60 90M40 120L0 160M28 180q20 60 0 130M0 250l60-40M120 20l4 60-20 34q-6 30 24 38 40-4 54-70V20M120 26q20 6 60-4M284 20q-4 50 10 70 30 20 50-10 20-30 18-60M314 96q10-50 44-44M0 20l8 30"/>
                    <!-- balina -->
                    <path d="M476 20q-60 200-116 200-30 0-24-20 10-40-8-66-10 40 0 66l-36 60q30 6 46-30 40 44 100 40 30-10 26-100M340 232q70 60 120-20M542 20q8 120-64 290-20 0-20-80 8-40 4-60M500 20l-14 100 6 100M500 214l38 36q-4-60-18-70M483 90h0M206 200q0-30 20-30 10-34 34-10 0 20 10 20 4 40-20 30-14 20-30 4-14-6-14-20M652 270q-4-30 14-34 10-34 36-8 20 0 12 30-8 30-24 22-24 36-38-10"/>
                    <!-- çiçek -->
                    <path d="M656 50q-60 40-84 46 30-60 70-66M666 46q50 10 80 32-20-50-70-56M650 60q-30 80-24 116 30-40 34-110 10 70 38 104 0-80-30-110M600 76l28-22M710 62l-24-18M634 130l10-40M684 130l-10-40"/><ellipse cx="656" cy="24" rx="14" ry="24"/>
                    <!-- çadır -->
                    <path d="M90 260l64 40M90 260l4 210 54-60M154 300l14-64q60 60 112 124-60 60-134 106l20-230M100 286l-4 160M100 286l50 20M190 270l68 90-40 40"/><ellipse cx="244" cy="405" rx="36" ry="26"/><path d="M208 405q2 50 20 52 50 0 52-52M230 440v16M248 440v16M44 410q-40 60-20 84 16 10 30-4 20-30-10-80M36 460q-14 24 0 38 14-10 0-38M38 500v16M0 510q24-8 34 8M38 520q20 40 58 62M46 530q50 0 50 60-8 60-96 66M0 620l20-30 10 24q20-8 28 0-10 40-58 40M26 555h0M50 580h0"/>
                    <path d="M66 800l12-84 14-26 102 20-10 90M72 704l122 24M184 724l-4 76"/><ellipse cx="102" cy="749" rx="7" ry="12"/><ellipse cx="126" cy="755" rx="7" ry="12"/><ellipse cx="149" cy="759" rx="7" ry="12"/>
                    <!-- kaktüs -->
                    <path d="M268 766q-60-120-62-180 4-56 40-58 40 10 46 60l10 160q-10 20-34 18M228 536q-10 60 40 226M246 530q30 60 38 222M206 530q-4-24 2-40l10 14 18-24 6 24 10-4-2 26M296 610q-4-40 20-50 20 0 18 20-10 60-34 86M314 560l-4-12M322 556l6-8M240 706q-50-20-54-60 10-20 30 0M190 630l-4-10"/>
                    <!-- tilki -->
                    <path d="M400 772q-4-110 50-120 60 10 96-30M400 772q110-50 150-80 40-60 24-110-10-50-40-60l-76-36M360 396q-4 20 10 56 0 30 4 60l12 6q0 50 50 90 20 20 30 44M360 396q30 0 46 34M406 430l4-30q14-30 22-42 16 40 10 80 20 30 16 46l-20 10-4 14-10-8-8 10-8-10-14 8-8-20-16 10M388 466q10-20 14 0M422 446q10-6 12 0M412 490l8 8 6-10M456 594l8 54M480 588v56M500 650q-8-50 20-68M446 654q-30 14-24 40 0 10 10 12-4 20 20 36"/>
                    <ellipse cx="562" cy="372" rx="53" ry="88"/><path d="M562 334l6 22 18-6-6 26 6 22-16 2-8 16-6-20-18-6 8-18-8-20 18-2z"/>
                    <!-- sarılan adam -->
                    <path d="M716 444q-60 0-112 94l70 70-14 24M736 490q-20-20-24-50l30-34q12-20 20 0l2 10M724 424q-14-60 6-90 20-30 40-8 26 10 16 40-20 6-18-6-20-10-14 30M736 490q20 0 30-24M766 470l32 34M790 370l-4 30 12 20-10 10q4 30-20 36-20-10-14-34 10-10 24 0M602 600q0 100 60 106 30-10 40-60 8-30 40-30 40 20 40 80l24 30M674 610q40-60 74 4M606 676q-10 50-6 100M652 726l10-16M700 700l-4 76"/>
                    <ellipse cx="842" cy="587" rx="77" ry="102"/><path d="M794 604q6 80 50 82 50-10 46-70M808 586q4-40 20 0M860 596q6-40 20-4M870 684l22 24q20-14 12-24l-14-30M882 668l10 16M760 752l124-54M884 704q40 0 50 72M760 752l14 24M878 760l4 16M890 748l6 30M902 752l4 24"/>
                    <!-- çeviri işareti -->
                    <path d="M746 160l84-42q10 8 6 20l-80 42q-12-4-10-20M782 106q10-6 14 14M818 146q-6 60-40 130 0 20 12 16 34-80 42-140M782 196q10-20 20 20l34 26q0 20-12 14l-38-34M842 300q-4-80 4-110 10-20 22 0l32 80q-4 16-14 8l-24-24-6 46q-8 10-14 0M856 236l4-20 14 24z"/>
                    <path d="M862 20l6 80h180l-8-56M910 96q0-20 14-20 10-20-4-20 0-20 20-16l40-10 40-10M950 96l30-30q60-4 88-46"/>
                    <!-- çalar saat -->
                    <path d="M946 200q4-16 20-12l104 24q18 6 16 26l-6 60q-4 30-24 26l-100-24q-22-4-20-34zM956 310v14l102 22 4-16M1038 202q4-18 18-14 10 4 10 18M926 170l10 16M944 146l6 26M916 208l16 2"/>
                    <path d="M840 430l14-56 36 14-12 30-6 44zM868 374q2-16 14-14 8 8 4 26M864 420l4-14M926 450l38 8-12 60-34-14zM936 450q-2-24 10-26 10 6 8 28M986 402q18-8 22-42 4 32 22 34-16 10-18 38-6-26-26-30M1010 494q0-14 10-18l76-18q12 0 14 20l6 60q0 16-10 20l-76 28q-12 2-16-20z"/>
                    <path d="M1036 512v32M1026 520l20 16M1046 518l-20 20M1065 506v32M1054 514l20 16M1076 512l-20 20M1093 498v32M1084 506l20 16M1104 504l-20 20M938 590q10-24 24-22l10 16 18-10q10 20 4 30 10 20 0 40l-14 14-12-14-20 4q-4-20-10-30zM1034 620q40 10 46 40l-10 60q-30-10-36-100M1080 636q20-8 30 20l-14 80M1096 740q-8-50 20-60 20 10 10 60 0-40 14-36l8 32-14 8M956 770l4-30 16-14 10 12-16 30"/>
                    <!-- sörf tahtası -->
                    <path d="M1122 380q10-50 54-76 20 0 40 40 50 90 58 170l-38 86q-20 0-50-50-60-70-64-170M1212 580l58-70M1218 590l56-62M1276 530q20 30 28 50M1280 546l24 34M1196 444q0-10 6-8 8 10 0 20-16 0-16-20 4-16 20-8 14 24-4 44M1196 394v16M1196 480v16M1166 430l10 4M1216 432l12-2M1176 470l-8 8M1218 464l10 8M1180 408l6 12M1208 404l-4 14"/>
                    <path d="M1196 20q-4 60 30 96 50 30 100-16 10-40 8-80M1214 20q4 50 24 90M1244 20q-10 60 4 90M1284 20q0 60-20 100M1310 20q0 50-28 92M1220 100l16 30M1236 130l26 2M1224 170l-8 22q-20 46-54 62v-34q30-4 50-54l14-36"/><ellipse cx="1287" cy="247" rx="20" ry="33"/><ellipse class="solid" cx="1339" cy="265" rx="27" ry="44"/><ellipse class="solid" cx="1379" cy="322" rx="20" ry="33"/>
                    <path d="M1238 320q-4-40 20-40 30 10 50 30l34 50q40 0 48 40-4 30-14 40-40-30-78-70l-26 6q-10-30-34-56M1266 310q16-6 18 10 16-8 22 16-6 30-34 40-20-40-6-66M1348 410l10-50M1298 500l52-34-12 70zM1242 680q-4-20 14-30 8-20 6-44 30 20 28 44 8 30-20 30-24 2-28 0M1262 650q10 10 20-4"/>
                    <!-- bambu ve çubuklar -->
                    <path d="M1426 20l38 226 26-10-36-216M1430 70l24-12M1444 160l28-10M1470 60l36 170 28-20-36-180M1490 136l26-14M1474 50q20-20 60-2-20 4-30 8 20 10 28 30-20-4-36-26M1390 160q30-30 50-26-16 20-20 30l22-14-40 54M1394 516l146-208q14 14 6 30l-148 190q-8 0-4-12M1376 570l162-170q14 10 10 26L1384 582q-8-2-8-12M1510 340l12 24M1486 380l10 24M1508 430l14 26M1482 460l10 24"/>
                    <ellipse cx="1480" cy="652" rx="56" ry="94"/><path d="M1428 626l102 64M1494 562q-40 60-40 90-4 60 20 90M1456 580q0 40 70 24M1430 690q30-50 56 40M1308 740q60-60 84-70l-20-32q0-20 12 4-4-30 6-20l4 16q14-10 12 8 0 20-14 30l30 100M1308 740q-4 20 0 36M1316 770q10-10 14 4 10-14 16 0 10-14 20 2M1236 750q0-24 16-22l24 24-10 24M520 776q10-14 24 0"/>
                </g>
            </defs>

            <g class="doodles">
                <use href="#part-a"/><use href="#part-b"/>
                <use href="#part-a" x="-897"/><use href="#part-b" x="-897"/>
                <use href="#part-a" x="-1794"/><use href="#part-b" x="-1794"/>
                <use href="#part-c"/><use href="#part-c" x="1794"/>
                <text x="1809" y="336" transform="rotate(-10 1809 336)" class="doodle-num">24</text>
                <text x="520" y="94" transform="rotate(6 520 94)" class="doodle-num clock">1:13</text>
            </g>
        </svg>

        <header class="top-bar"></header>

        <main class="messages">
            <!-- Giden mesaj -->
            <div class="bubble outgoing">
                <div class="attachment">
                    <div class="attachment-card">
                        <div class="attachment-side"><span class="ghost-btn"></span><span class="green-btn"></span></div>
                    </div>
                </div>
                <p class="text">
                    Web sayfamızda hali hazırda bu sistemden var, fakat bazı saatlerde ne oluyorsa onay<br>
                    vermemeye başlıyor. Mail geliyor, sms geliyor ödeme geliyor fakat başarılı url dönmüyor<br>
                    sanırım. Biz tamamen hatasız bir şekilde banka entegrasyonlu veya mail/sms<br>
                    entegrasyonlu ödemeyi yapan kişinin mağdur olmayacağı şekilde ve yukarıdaki örnekte
                </p>
                <div class="last-line">
                    <p class="text">yer aldığı gibi bir tasarım istiyoruz.</p>
                    <span class="meta">17:31
                        <svg width="31" height="20" viewBox="0 0 31 20"><path d="M2 12l5 6L21 2M14 16l2 2L29 2"/></svg>
                    </span>
                </div>
                <svg class="tail" width="30" height="40" viewBox="0 0 30 40"><path d="M0 0h17v18q2 14 13 21-14 0-20-6-4 5-10 5z"/></svg>
            </div>

            <!-- Gelen mesajlar -->
            <div class="bubble incoming first">
                <p class="text">Ödeme formu bu şekilde mi acaba? İşlem açıklaması göremedim, referans işlem numarasını alacak bir<br>otomasyonla daha kolay olur. Dilerseniz banka destekli yapabiliriz. Mail ile her bankada uygun olmuyor.</p>
                <span class="meta">17:32</span>
            </div>

            <div class="bubble incoming short">
                <p class="text">Örnek bir tane iletelim.</p>
                <span class="meta">17:33</span>
            </div>

            <div class="bubble incoming album">
                <div class="shots">
                    <!-- Ödeme bilgileri -->
                    <div class="shot pay">
                        <div class="pay-strip"></div>
                        <div class="bank">
                            <div class="bank-logo">
                                <svg width="22" height="44" viewBox="0 0 22 44"><circle cx="10.500" cy="3.500" r="2.300"/><path d="M8.500 8h4v26h-4zM10.500 42l-3-6h6z"/><path class="s" d="M17.500 15V11.500Q6 6 4 14q-.5 4.500 5 7.500 9 4 9.500 9-.5 8-9 6.500-5-.5-6.500-2.500v-5"/></svg>
                            </div>
                            <h2>İş Bankası</h2>
                        </div>
                        <div class="timer">
                            <svg width="30" height="30" viewBox="0 0 30 30"><circle cx="15" cy="15" r="12.500"/><path d="M15 8v8h6.500"/></svg>
                            <span>29 dakika 51 saniye</span>
                        </div>
                        <div class="divider"></div>
                        <div class="step">
                            <span class="step-num">1</span>
                            <h3>ÖDEME YAPIN</h3>
                        </div>
                        <p class="step-info">Aşağıdaki bilgiler ile ödemeyi yapın</p>
                        <div class="fields">
                            <div class="field">
                                <div><p class="label">ÖDEMENİZ GEREKEN TUTAR</p><p class="value">500,00₺</p></div>
                                <span class="copy"><svg width="22" height="24" viewBox="0 0 22 24"><path d="M1.500 6.500h14v16h-14zM6 6V1.500h14.500v15H16"/></svg></span>
                            </div>
                            <div class="field">
                                <div><p class="label">IBAN NUMARASI</p></div>
                                <span class="copy"><svg width="22" height="24" viewBox="0 0 22 24"><path d="M1.500 6.500h14v16h-14zM6 6V1.500h14.500v15H16"/></svg></span>
                            </div>
                            <div class="field">
                                <div><p class="label">HESAP SAHİBİ ALICI ADI</p></div>
                                <span class="copy"><svg width="22" height="24" viewBox="0 0 22 24"><path d="M1.500 6.500h14v16h-14zM6 6V1.500h14.500v15H16"/></svg></span>
                            </div>
                            <div class="field required">
                                <div><p class="label">ÖDEME AÇIKLAMASI <b class="star">*</b> <b>BU ALAN ZORUNLUDUR</b></p></div>
                                <span class="copy"><svg width="22" height="24" viewBox="0 0 22 24"><path d="M1.500 6.500h14v16h-14zM6 6V1.500h14.500v15H16"/></svg></span>
                            </div>
                        </div>
                        <div class="pay-foot"></div>
                        <!-- Karalamalar -->
                        <svg class="scribbles" width="538" height="1084" viewBox="38 460 538 1084">
                            <path class="ink" d="M57 1139h10M70 1139h7M62 1285.500h5M262 1286l4 5"/>
                            <path class="green" d="M96 567q5-3 16-1 1-6 10-4 20 3 50-.5 40-4 134-2 8 2 7 7-1 6-8 6h-18q10 0 20 2 2 8-2 15-4 6-10 3-5-3-6-5l-30 1q-6 3-14 2 5 5 2 8-2 3-10 3-90-7-134-24-12-4-7-11z"/>
                            <path class="ink thin" d="M280 572h4M290 572h4M301 572h4M150 564.500h3M156 564.500h3"/>
                            <path class="green" d="M54 1141q30-4 60-8 60-8 100-6 30 2 48 6-2-8 6-9 60 2 170 1 6 0 6 9 18-1 25 5 1 3 0 5 16 2 22 6 6 6-2 9l-7 1q-4 4-10 3-110-3-186-2-1 10-8 14-8 2-30 0-60-8-108-19l-84 0q-11-6-2-15z M247 1161q16 4 27 0z" fill-rule="evenodd"/>
                            <path class="green" d="M38 1286q10-1 24-1 6-3 14-3 80-2 180 1 8 2 9 6 9 1 7 8-2 5-9 5-1 6-9 8-60 1-110 1-8-1-10-4l-70-.500q-6 0-6-8H38z"/>
                            <path class="green" d="M38 1426l12-1q30-8 80-7 40 1 56 5 5 6 2 11-2 4-5 4 3 7-1 10-6 5-40 5-50 0-84-2-9-2-9-13H38z"/>
                        </svg>
                    </div>

                    <!-- Bildirim formu -->
                    <div class="shot notify">
                        <div class="notify-strip"></div>
                        <h2>LDİRİMİ TAMAMLAYIN</h2>
                        <p class="lead">ldurarak bildirimi tamamlayın</p>
                        <div class="alert">
                            <p class="l1"><b>emli:</b> Ödeme numaranızı</p>
                            <p class="l2">klamaya yazmazsanız ödeme</p>
                            <p class="l3">aylanmaz! Ödeme açıklaması</p>
                            <p class="l4"><u>lece</u><span>yazın.</span></p>
                        </div>
                        <p class="form-label">Gönderen Ad, Soyad / Unvan</p>
                        <div class="input">ad</div>
                        <div class="submit">Ödemeyi Bildir</div>
                        <div class="notify-foot"></div>
                        <svg class="scribbles" width="538" height="1084" viewBox="584 460 538 1084">
                            <path class="curve" d="M765 1004l4-8M787 996q3 8 11 8t11-8M809 996q2 8 10 8 7 0 9-8M831 996q4 8 10 8 6 0 8-8"/>
                            <path class="green" d="M662 970q60 1 144-2 30-3 68-6 9 2 9 11-1 9-10 10l-15 2q-3 10-20 13-90 6-158 13-18 0-18-11 0-5 3-8-13-1-14-12 2-9 11-10z"/>
                        </svg>
                    </div>
                </div>
                <span class="meta">17:34</span>
            </div>

            <div class="bubble incoming next"></div>
        </main>

        <!-- Alt çubuk -->
        <div class="bottom-bar"></div>
        <div class="scroll-down">
            <svg width="28" height="20" viewBox="0 0 28 20"><path d="M3 4l11 11L25 4"/></svg>
        </div>
        <div class="caps-badge">
            <svg width="30" height="30" viewBox="0 0 30 30"><path d="M15 2.500L3 14h5.500v6h13v-6H27zM8.500 23h13v4.500h-13z"/></svg>
        </div>
    </div>
</body>
</html>
```
FILE: styles.css
```css
* {
    margin: 0;
    padding: 0;
    box-sizing: border-box;
}
body {
    font-family: Inter, "Open Sans", sans-serif;
    background-color: #0a0a0a;
    overflow: hidden;
}
.chat {
    position: relative;
    width: 1970px;
    height: 1626px;
    overflow: hidden;
    background-color: #0a0a0a;
}

/* Duvar kağıdı */
.wallpaper {
    position: absolute;
    top: 0;
    left: 0;
}
.doodles {
    fill: none;
    stroke: #212222;
    stroke-width: 2.4;
    stroke-linecap: round;
    stroke-linejoin: round;
}
.wallpaper path,
.wallpaper ellipse {
    vector-effect: non-scaling-stroke;
}
.wallpaper .solid {
    fill: #0a0a0a;
}
.dot {
    stroke-width: 12.5;
}
.dot-hole {
    stroke: #0a0a0a;
    stroke-width: 7.8;
}
.ring {
    stroke-width: 19;
}
.ring-hole {
    stroke: #0a0a0a;
    stroke-width: 14.2;
}
.doodle-num {
    font-size: 42px;
    font-weight: 700;
    stroke-width: 2;
}
.doodle-num.clock {
    font-size: 35px;
}

.top-bar {
    position: relative;
    height: 7px;
    background-color: #242625;
    border-bottom: 1px solid #3b3c3c;
}

/* Mesajlar */
.messages {
    position: relative;
    display: flex;
    flex-direction: column;
    align-items: flex-start;
}
.bubble {
    border-radius: 22px;
    color: #fff;
}
.text {
    font-size: 26px;
    line-height: 32px;
    letter-spacing: -0.25px;
    white-space: nowrap;
}
.meta {
    font-size: 22px;
    line-height: 32px;
    letter-spacing: 0.4px;
    color: #a0a2a1;
}
.outgoing {
    position: relative;
    align-self: flex-end;
    width: 1098px;
    height: 226px;
    margin-right: 13px;
    padding: 0 7px;
    background-color: #264a39;
    border-radius: 0 0 20px 22px;
}
.attachment {
    height: 43px;
    padding: 0 22px 16px 11px;
    background-color: #f0f1f7;
    border-radius: 0 0 16px 16px;
}
.attachment-card {
    display: flex;
    justify-content: flex-end;
    height: 27px;
    background-color: #fff;
    border-radius: 0 0 14px 14px;
    overflow: hidden;
}
.attachment-side {
    display: flex;
    justify-content: space-between;
    width: 520px;
    padding: 0 27px 0 28px;
    background-color: #f9fafc;
}
.ghost-btn {
    width: 142px;
    height: 3px;
    background-color: #fff;
    border-bottom: 1px solid #e8eaf0;
    border-radius: 0 0 6px 6px;
}
.green-btn {
    width: 158px;
    height: 2px;
    background-color: #5cb585;
    border-radius: 0 0 6px 6px;
}
.outgoing .text {
    padding-left: 12px;
}
.attachment + .text {
    padding-top: 11px;
}
.last-line {
    display: flex;
    justify-content: space-between;
}
.outgoing .meta {
    display: flex;
    gap: 8px;
    padding: 5px 11px 0 0;
    color: #a8b8af;
}
.outgoing .meta svg {
    margin-top: 6px;
    fill: none;
    stroke: #a8b8af;
    stroke-width: 3;
    stroke-linecap: round;
    stroke-linejoin: round;
}
.tail {
    position: absolute;
    right: -11px;
    bottom: -1px;
    fill: #264a39;
}
.incoming {
    margin-left: 31px;
    background-color: #242625;
}
.first {
    display: flex;
    flex-direction: column;
    width: 1272px;
    height: 122px;
    margin-top: 26px;
    padding: 12px 20px 0 19px;
}
.first .meta {
    margin-top: 7px;
    align-self: flex-end;
}
.short {
    display: flex;
    justify-content: space-between;
    width: 396px;
    height: 56px;
    margin-top: 8px;
    padding: 12px 20px 0 19px;
}
.short .text {
    letter-spacing: -0.1px;
}
.short .meta {
    padding-top: 4px;
}
.album {
    display: flex;
    flex-direction: column;
    width: 1098px;
    height: 1136px;
    margin-top: 8px;
    padding: 7px;
}
.shots {
    display: flex;
    gap: 8px;
}
.album .meta {
    align-self: flex-end;
    padding: 5px 12px 0 0;
}
.next {
    width: 1265px;
    height: 60px;
    margin-top: 8px;
}

/* Ekran görüntüleri */
.shot {
    position: relative;
    width: 538px;
    height: 1084px;
    background-color: #fff;
    border-radius: 16px;
    overflow: hidden;
    white-space: nowrap;
    font-feature-settings: "cv11";
}
.scribbles {
    position: absolute;
    top: 0;
    left: 0;
}
.green {
    fill: #7dfca6;
}
.ink {
    fill: none;
    stroke: #12142a;
    stroke-width: 2;
}
.ink.thin {
    stroke-width: 1;
}
.curve {
    fill: none;
    stroke: #12142a;
    stroke-width: 5;
}

.pay-strip {
    height: 17px;
    background: linear-gradient(90deg, #eaeffa, #f4f6fa 50%, #edf0fa);
    border-bottom: 4px solid #2a5698;
}
.bank {
    display: flex;
    gap: 20px;
    height: 139px;
    padding-top: 24px;
}
.bank-logo {
    display: flex;
    align-items: center;
    justify-content: center;
    width: 65px;
    height: 65px;
    margin: 9px 0 0 -3px;
    background-color: #1b4086;
    border-radius: 16px;
}
.bank-logo svg {
    fill: #fff;
}
.bank-logo .s {
    fill: none;
    stroke: #fff;
    stroke-width: 3;
}
.bank h2 {
    height: 46px;
    padding-top: 1px;
    font-size: 32px;
    line-height: 40px;
    letter-spacing: 0.45px;
    font-weight: 800;
    background: linear-gradient(135deg, #27519a, #3468b4 50%, #223f6e);
    background-clip: text;
    -webkit-background-clip: text;
    color: transparent;
}
.timer {
    display: flex;
    align-items: center;
    justify-content: center;
    gap: 15px;
    height: 81px;
    margin: -1px -2px 0;
    padding-left: 1px;
    background-color: #faf0ef;
    border: 2px solid #f4cdd0;
    border-radius: 10px;
    box-shadow: 0 1px 5px rgba(0, 0, 0, 0.06);
    color: #dc5049;
    font-size: 23px;
    font-weight: 700;
    letter-spacing: 0.25px;
}
.timer svg {
    fill: none;
    stroke: #dc5049;
    stroke-width: 3;
}
.divider {
    height: 36px;
    margin-top: 22px;
    background: linear-gradient(90deg, #edf1fb, #f3f5fa 45%, #eaeefa);
    border-top: 3px solid #e8eaef;
    border-bottom: 2px solid #eaebf1;
}
.step {
    display: flex;
    align-items: center;
    gap: 19px;
    height: 74px;
    padding-top: 23px;
}
.step-num {
    width: 51px;
    height: 51px;
    margin-left: -5px;
    background: linear-gradient(135deg, #27519a, #3468b4 50%, #223f6e);
    border-radius: 12px;
    box-shadow: 0 2px 4px rgba(0, 0, 0, 0.15);
    color: #fff;
    font-size: 24px;
    font-weight: 700;
    line-height: 50px;
    text-align: center;
}
.step h3 {
    color: #12142a;
    font-size: 28px;
    font-weight: 800;
    letter-spacing: -0.1px;
}
.step-info {
    height: 69px;
    margin-left: -3px;
    padding-top: 20px;
    color: #4b5568;
    font-size: 23px;
    font-weight: 500;
    line-height: 36px;
    letter-spacing: 0.38px;
}
.fields {
    display: flex;
    flex-direction: column;
    gap: 20px;
    margin: 19px -2px 0;
}
.field {
    display: flex;
    align-items: center;
    justify-content: space-between;
    height: 127px;
    padding: 0 18px;
    background-color: #f1f3f9;
    border: 2px solid #dfe3ee;
    border-radius: 12px;
}
.field > div {
    align-self: flex-start;
    padding-top: 24px;
}
.field.required {
    border-color: #d9605b;
}
.label {
    color: #6a778e;
    font-size: 17px;
    font-weight: 700;
    line-height: 24px;
    letter-spacing: 1px;
}
.label b {
    margin-left: 7px;
    color: #dc4f49;
    font-size: 16px;
    font-weight: 700;
    letter-spacing: 0.5px;
}
.value {
    margin-top: 16px;
    color: #12142a;
    font-size: 26px;
    font-weight: 700;
    line-height: 34px;
    letter-spacing: 0;
}
.copy {
    display: flex;
    align-items: center;
    justify-content: center;
    width: 59px;
    height: 59px;
    background: linear-gradient(135deg, #27519a, #3468b4 50%, #1d3a68);
    border-radius: 12px;
    box-shadow: 0 2px 4px rgba(0, 0, 0, 0.15);
}
.copy svg {
    fill: none;
    stroke: #fff;
    stroke-width: 2.4;
    stroke-linejoin: round;
}
.pay-foot {
    height: 18px;
    margin-top: 42px;
    background-color: #f0f3f8;
    border-top: 3px solid #e6e7e9;
}

.notify-strip {
    height: 27px;
    background: linear-gradient(90deg, #f5f7fb, #f4f6fa);
    border-bottom: 2px solid #e9ebee;
}
.notify h2 {
    margin: 50px 0 0 -24px;
    color: #12142a;
    font-size: 46px;
    font-weight: 800;
    line-height: 56px;
    letter-spacing: 0.2px;
}
.lead,
.alert {
    color: #4f5a6b;
    font-size: 38px;
    font-weight: 500;
}
.lead {
    margin: 52px 0 0 -5px;
    line-height: 50px;
    letter-spacing: 0.9px;
}
.alert {
    height: 303px;
    margin-top: 57px;
    padding-top: 32px;
    background-color: #fcf4f5;
    border-top: 2px solid #f6cbd3;
    border-bottom: 2px solid #f4c8ce;
    box-shadow: 0 4px 20px rgba(220, 80, 80, 0.07);
    line-height: 58.6px;
    letter-spacing: 0.8px;
}
.alert b {
    color: #12142a;
    letter-spacing: 0.5px;
}
.l1 {
    margin-left: -9px;
    letter-spacing: 1.05px;
}
.l2 {
    margin-left: -8px;
}
.l3 {
    margin-left: -15px;
    letter-spacing: 0.95px;
}
.l4 {
    margin-left: -4px;
}
.l4 u {
    text-decoration-thickness: 2px;
    text-underline-offset: 5px;
}
.l4 span {
    margin-left: 202px;
    letter-spacing: -0.2px;
}
.form-label {
    margin: 60px 0 0 -3px;
    color: #12142a;
    font-size: 36px;
    font-weight: 700;
    line-height: 46px;
    letter-spacing: 1.3px;
}
.input {
    height: 121px;
    margin-top: 23px;
    border-top: 2px solid #e6e7ea;
    border-bottom: 2px solid #e6e7ea;
    color: #6c7789;
    font-size: 41px;
    line-height: 114px;
    text-indent: -5px;
}
.submit {
    height: 131px;
    margin-top: 43px;
    background: linear-gradient(150deg, #2b579b 5%, #3468b4 50%, #24487c 95%);
    box-shadow: 0 4px 10px rgba(0, 0, 0, 0.1);
    color: #fff;
    font-size: 42px;
    font-weight: 700;
    line-height: 129px;
    letter-spacing: 1.3px;
    text-align: center;
}
.notify-foot {
    height: 29px;
    margin-top: 37px;
    background-color: #f0f3f8;
    border-top: 3px solid #e6e7e9;
}

/* Üstte duran öğeler */
.bottom-bar {
    position: absolute;
    left: 0;
    bottom: 0;
    width: 100%;
    height: 22px;
    background: linear-gradient(90deg, #171716 65%, #0d0d0d 75%);
    border-bottom: 1px solid #4a4a4a;
}
.scroll-down {
    position: absolute;
    right: -2px;
    bottom: 70px;
    display: flex;
    align-items: center;
    justify-content: center;
    width: 64px;
    height: 64px;
    background-color: #242625;
    border-radius: 50%;
}
.scroll-down svg {
    fill: none;
    stroke: #a0a2a1;
    stroke-width: 3.4;
    stroke-linecap: round;
    stroke-linejoin: round;
}
.caps-badge {
    position: absolute;
    left: 92px;
    top: 1586px;
    width: 60px;
    height: 46px;
    padding: 8px 0 0 14px;
    background-color: #05c557;
    border: 1px solid #14e05a;
    border-radius: 23px;
}
.caps-badge svg {
    display: block;
    fill: none;
    stroke: #fff;
    stroke-width: 2.8;
    stroke-linejoin: round;
}
```
